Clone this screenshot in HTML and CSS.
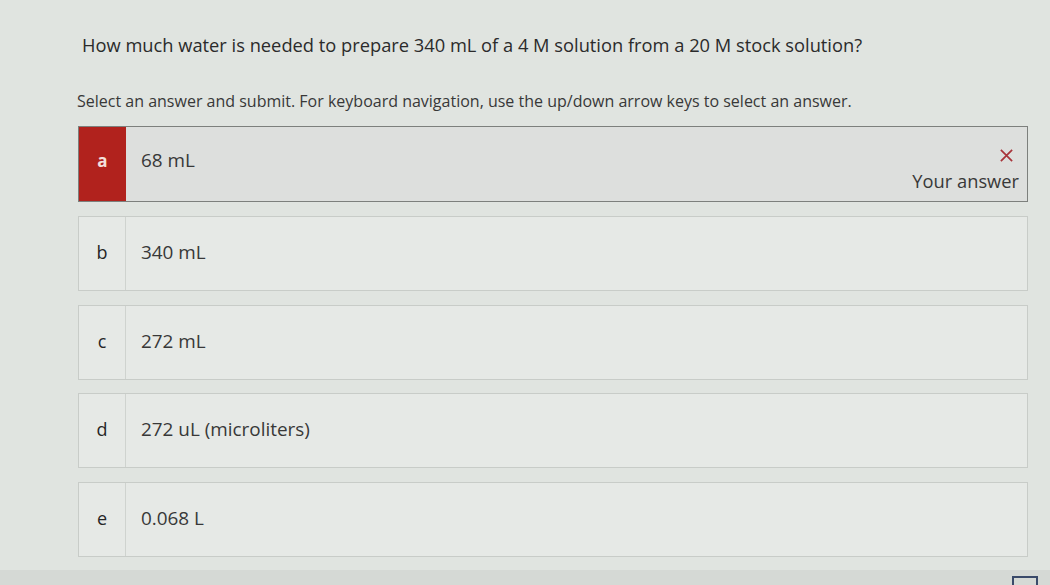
FILE: index.html
```html
<!DOCTYPE html>
<html>
<head>
<meta charset="utf-8">
<link rel="stylesheet" href="styles.css">
</head>
<body>
<div class="page">
  <main class="quiz">
    <h1 class="question">How much water is needed to prepare 340 mL of a 4 M solution from a 20 M stock solution?</h1>
    <p class="hint">Select an answer and submit. For keyboard navigation, use the up/down arrow keys to select an answer.</p>
    <ul class="answers">
      <li class="answer wrong">
        <span class="letter">a</span>
        <span class="text">68 mL</span>
        <span class="status">
          <svg class="x" width="15" height="15" viewBox="0 0 16 16"><path d="M2 2 L14 14 M14 2 L2 14" stroke="#a8343a" stroke-width="1.8" fill="none"/></svg>
          <span class="status-label">Your answer</span>
        </span>
      </li>
      <li class="answer"><span class="letter">b</span><span class="text">340 mL</span></li>
      <li class="answer"><span class="letter">c</span><span class="text">272 mL</span></li>
      <li class="answer"><span class="letter">d</span><span class="text">272 uL (microliters)</span></li>
      <li class="answer"><span class="letter">e</span><span class="text">0.068 L</span></li>
    </ul>
  </main>
  <footer class="bottom">
    <span class="corner-icon"></span>
  </footer>
</div>
</body>
</html>
```
FILE: styles.css
```css
html, body {
  margin: 0;
  padding: 0;
}
body {
  background: #e0e4e0;
  font-family: "Open Sans", "Noto Sans", sans-serif;
  color: #333;
  width: 1050px;
  height: 585px;
  overflow: hidden;
}
.page {
  display: flex;
  flex-direction: column;
  height: 585px;
}
.quiz {
  padding: 32px 22px 0 78px;
  flex: 1;
}
.question {
  font-size: 18.3px;
  font-weight: 400;
  margin: 0 0 0 4px;
  line-height: 26px;
  color: #2b2b2b;
  white-space: nowrap;
}
.hint {
  font-size: 16px;
  margin: 32px 0 0 -1px;
  line-height: 22px;
  color: #383838;
  white-space: nowrap;
}
.answers {
  list-style: none;
  margin: 14px 0 0 0;
  padding: 0;
  display: flex;
  flex-direction: column;
  gap: 13.5px;
}
.answer {
  display: flex;
  align-items: stretch;
  height: 73px;
  border: 1px solid #c8ccc8;
  background: #e6e9e6;
  font-size: 18.9px;
}
.letter {
  width: 46px;
  border-right: 1px solid #cfd3cf;
  display: flex;
  align-items: center;
  justify-content: center;
  font-size: 18px;
  color: #262626;
  padding-bottom: 3px;
}
.text {
  flex: 1;
  display: flex;
  align-items: center;
  padding-left: 15px;
  color: #383838;
  padding-bottom: 3px;
}
.answer.wrong {
  border: 1px solid #7d807d;
  background: #dddfdd;
  height: 74px;
  margin-bottom: 0.5px;
}
.answer.wrong .letter,
.answer.wrong .text {
  padding-bottom: 8px;
}
.answer.wrong .letter {
  background: #b1221d;
  color: #f3e0dc;
  font-weight: 700;
  font-size: 17px;
  border-right: none;
  width: 47px;
}
.status {
  display: flex;
  flex-direction: column;
  align-items: flex-end;
  justify-content: center;
  padding-right: 8px;
  padding-top: 12px;
}
.x {
  margin-right: 5px;
  margin-bottom: 6px;
}
.status-label {
  font-size: 18.3px;
  line-height: 24px;
  color: #383838;
}
.bottom {
  height: 15px;
  background: #d5d9d5;
  position: relative;
}
.corner-icon {
  position: absolute;
  right: 12px;
  top: 6px;
  width: 22px;
  height: 10px;
  border: 2px solid #3a4a6a;
  border-bottom: none;
}
```
